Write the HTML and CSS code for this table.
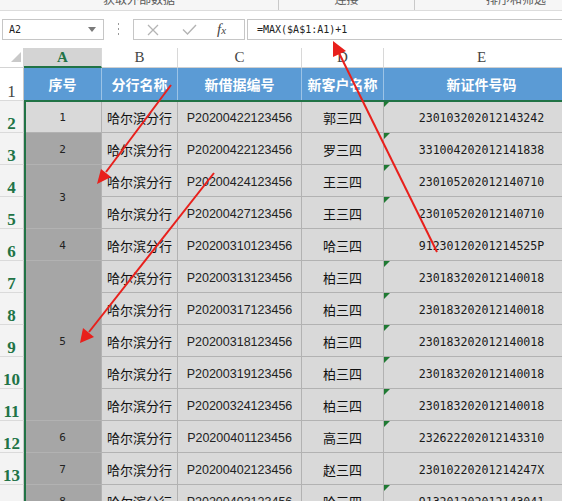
FILE: index.html
```html
<!DOCTYPE html>
<html lang="zh-CN">
<head>
<meta charset="utf-8">
<title>Sheet</title>
<link rel="stylesheet" href="styles.css">
</head>
<body>
<div class="ribbon">
  <span class="grp g1">获取外部数据</span>
  <span class="sep"></span>
  <span class="grp g2">连接</span>
  <span class="sep"></span>
  <span class="grp g3">排序和筛选</span>
</div>
<div class="fbar">
  <div class="namebox"><span>A2</span>
    <svg class="dd" width="8" height="5" viewBox="0 0 8 5"><path d="M0 0H8L4 5Z" fill="#7a7a7a"/></svg>
  </div>
  <div class="dots">
    <svg width="3" height="13" viewBox="0 0 3 13"><rect x="1" y="0" width="1" height="2" fill="#9a9a9a"/><rect x="1" y="5" width="1" height="2" fill="#9a9a9a"/><rect x="1" y="10" width="1" height="2" fill="#9a9a9a"/></svg>
  </div>
  <div class="fxbox">
    <svg class="ic" width="12" height="12" viewBox="0 0 12 12"><path d="M1 1L11 11M11 1L1 11" stroke="#b4b4b4" stroke-width="1.3" fill="none"/></svg>
    <svg class="ic" width="15" height="11" viewBox="0 0 15 11"><path d="M1 5.5L5.5 10L14 1" stroke="#b4b4b4" stroke-width="1.4" fill="none"/></svg>
    <span class="fx"><i>f</i><i class="fxx">x</i></span>
  </div>
  <div class="formula">=MAX($A$1:A1)+1</div>
</div>

<div class="sheet">
  <div class="corner"><svg width="10" height="10" viewBox="0 0 10 10"><path d="M10 0V10H0Z" fill="#c9c9c9"/></svg></div>
  <div class="ch sel">A</div>
  <div class="ch">B</div>
  <div class="ch">C</div>
  <div class="ch">D</div>
  <div class="ch">E</div>

  <div class="rh">1</div>
  <div class="h">序号</div>
  <div class="h">分行名称</div>
  <div class="h">新借据编号</div>
  <div class="h">新客户名称</div>
  <div class="h">新证件号码</div>

  <div class="rh sel">2</div>
  <div class="c a act">1</div>
  <div class="c">哈尔滨分行</div>
  <div class="c p">P20200422123456</div>
  <div class="c">郭三四</div>
  <div class="c e tx">230103202012143242</div>

  <div class="rh sel">3</div>
  <div class="c a">2</div>
  <div class="c">哈尔滨分行</div>
  <div class="c p">P20200422123456</div>
  <div class="c">罗三四</div>
  <div class="c e tx">331004202012141838</div>

  <div class="rh sel">4</div>
  <div class="c a span2">3</div>
  <div class="c">哈尔滨分行</div>
  <div class="c p">P20200424123456</div>
  <div class="c">王三四</div>
  <div class="c e tx">230105202012140710</div>

  <div class="rh sel">5</div>
  <div class="c">哈尔滨分行</div>
  <div class="c p">P20200427123456</div>
  <div class="c">王三四</div>
  <div class="c e tx">230105202012140710</div>

  <div class="rh sel">6</div>
  <div class="c a">4</div>
  <div class="c">哈尔滨分行</div>
  <div class="c p">P20200310123456</div>
  <div class="c">哈三四</div>
  <div class="c e">91230120201214525P</div>

  <div class="rh sel">7</div>
  <div class="c a span5">5</div>
  <div class="c">哈尔滨分行</div>
  <div class="c p">P20200313123456</div>
  <div class="c">柏三四</div>
  <div class="c e tx">230183202012140018</div>

  <div class="rh sel">8</div>
  <div class="c">哈尔滨分行</div>
  <div class="c p">P20200317123456</div>
  <div class="c">柏三四</div>
  <div class="c e tx">230183202012140018</div>

  <div class="rh sel">9</div>
  <div class="c">哈尔滨分行</div>
  <div class="c p">P20200318123456</div>
  <div class="c">柏三四</div>
  <div class="c e tx">230183202012140018</div>

  <div class="rh sel">10</div>
  <div class="c">哈尔滨分行</div>
  <div class="c p">P20200319123456</div>
  <div class="c">柏三四</div>
  <div class="c e tx">230183202012140018</div>

  <div class="rh sel">11</div>
  <div class="c">哈尔滨分行</div>
  <div class="c p">P20200324123456</div>
  <div class="c">柏三四</div>
  <div class="c e tx">230183202012140018</div>

  <div class="rh sel">12</div>
  <div class="c a">6</div>
  <div class="c">哈尔滨分行</div>
  <div class="c p">P20200401123456</div>
  <div class="c">高三四</div>
  <div class="c e tx">232622202012143310</div>

  <div class="rh sel">13</div>
  <div class="c a">7</div>
  <div class="c">哈尔滨分行</div>
  <div class="c p">P20200402123456</div>
  <div class="c">赵三四</div>
  <div class="c e">23010220201214247X</div>

  <div class="rh sel">14</div>
  <div class="c a">8</div>
  <div class="c">哈尔滨分行</div>
  <div class="c p">P20200403123456</div>
  <div class="c">哈三四</div>
  <div class="c e tx">913201202012143041</div>

  <div class="selbox"></div>
</div>

<svg class="arrows" width="562" height="501" viewBox="0 0 562 501">
  <g fill="#e8201c" stroke="#e8201c">
    <line x1="171" y1="85" x2="106" y2="172" stroke-width="2"/>
    <polygon points="97,184 111,177 101,169" stroke="none"/>
    <line x1="214" y1="173" x2="89" y2="332" stroke-width="2"/>
    <polygon points="80,343 94,337 83,328" stroke="none"/>
    <line x1="437" y1="252" x2="339" y2="53" stroke-width="2"/>
    <polygon points="333,41 346,51 333,57" stroke="none"/>
  </g>
</svg>
</body>
</html>
```

FILE: styles.css
```css
* { box-sizing: border-box; }
html, body { margin: 0; padding: 0; }
body {
  width: 562px;
  height: 501px;
  overflow: hidden;
  background: #ffffff;
  position: relative;
  font-family: "Liberation Sans", "Noto Sans CJK SC", sans-serif;
}

/* ribbon strip (cut off) */
.ribbon {
  display: flex;
  height: 11px;
  overflow: hidden;
  background: #f6f6f6;
  border-bottom: 1px solid #dcdcdc;
}
.grp {
  font: 12px/12px "Noto Sans CJK SC", sans-serif;
  color: #5a5a5a;
  margin-top: -7px;
  text-align: center;
  flex: none;
}
.g1 { width: 278px; }
.g2 { width: 135px; }
.g3 { width: 202px; }
.sep { flex: none; width: 1px; height: 10px; background: #c9c9c9; }

/* formula bar */
.fbar {
  display: flex;
  align-items: center;
  height: 37px;
  padding-left: 2px;
}
.namebox {
  width: 102px;
  height: 21px;
  border: 1px solid #c6c6c6;
  display: flex;
  align-items: center;
  justify-content: space-between;
  padding: 0 7px 0 6px;
  font: 10px "DejaVu Sans Mono", monospace;
  color: #222;
}
.dots {
  width: 29px;
  display: flex;
  justify-content: center;
  align-items: center;
}
.fxbox {
  width: 112px;
  height: 21px;
  border: 1px solid #c6c6c6;
  display: flex;
  align-items: center;
  padding-left: 13px;
  gap: 0;
}
.fxbox .ic:first-child { margin-right: 23px; }
.fxbox .ic:nth-child(2) { margin-right: 20px; }
.fx {
  font: italic 15px "Liberation Serif", serif;
  color: #444;
  line-height: 1;
}
.fxx { font-size: 11px; }
.formula {
  flex: 1;
  margin-left: 2px;
  height: 21px;
  border: 1px solid #c6c6c6;
  border-right: none;
  display: flex;
  align-items: center;
  padding-left: 9px;
  font: 10px "DejaVu Sans Mono", monospace;
  color: #222;
}

/* sheet grid */
.sheet {
  position: relative;
  display: grid;
  grid-template-columns: 24px 78px 76px 124px 82px 196px;
  grid-template-rows: 20px 33px repeat(13, 32px);
  width: 580px;
}
.corner {
  background: #fff;
  border-right: 1px solid #d4d4d4;
  border-bottom: 1px solid #d4d4d4;
  display: flex;
  align-items: flex-end;
  justify-content: flex-end;
  padding: 0 2px 5px 0;
}
.ch {
  background: #fff;
  border-right: 1px solid #d8d8d8;
  border-bottom: 1px solid #d0d0d0;
  display: flex;
  align-items: flex-end;
  justify-content: center;
  font: 15px/1 "Liberation Serif", serif;
  color: #444;
  padding-bottom: 2px;
}
.ch.sel {
  background: #d4d4d4;
  color: #217346;
  font-weight: bold;
  border-bottom: 2px solid #217346;
  padding-bottom: 1px;
}
.rh {
  background: #fff;
  border-right: 1px solid #c8c8c8;
  border-bottom: 1px solid #dadada;
  display: flex;
  align-items: flex-end;
  justify-content: center;
  font: 17px/1 "Liberation Serif", serif;
  color: #444;
}
.rh.sel {
  background: #f3f3f3;
  color: #217346;
  font-weight: bold;
}
.h {
  background: #5b9bd5;
  color: #fff;
  font: bold 14px "Noto Sans CJK SC", sans-serif;
  display: flex;
  align-items: center;
  justify-content: center;
  border-right: 1px solid #9cc3e6;
  border-bottom: 1px solid #a0a0a0;
}
.c {
  position: relative;
  background: #d9d9d9;
  border-right: 1px solid #b2b2b2;
  border-bottom: 1px solid #b2b2b2;
  display: flex;
  align-items: center;
  justify-content: center;
  padding-top: 2px;
  font: 13px "Noto Sans CJK SC", sans-serif;
  color: #111;
  white-space: nowrap;
}
.c.a {
  background: #a6a6a6;
  font: 11px "DejaVu Sans Mono", monospace;
  color: #222;
}
.c.a.act { background: #d9d9d9; }
.span2 { grid-row: span 2; }
.span5 { grid-row: span 5; }
.c.p {
  font: 12.5px "Liberation Sans", sans-serif;
  color: #222;
}
.c.e {
  font: 11.6px "DejaVu Sans Mono", monospace;
  color: #1a1a1a;
}
.tx::before {
  content: "";
  position: absolute;
  left: 0;
  top: 0;
  border-style: solid;
  border-width: 6px 6px 0 0;
  border-color: #1f7a33 transparent transparent transparent;
}
.selbox {
  position: absolute;
  grid-column: 2;
  grid-row: 3 / 16;
  left: 0;
  right: -1px;
  top: -1px;
  bottom: 0;
  border: 2px solid #217346;
  pointer-events: none;
}

.arrows {
  position: absolute;
  left: 0;
  top: 0;
  pointer-events: none;
}
```
